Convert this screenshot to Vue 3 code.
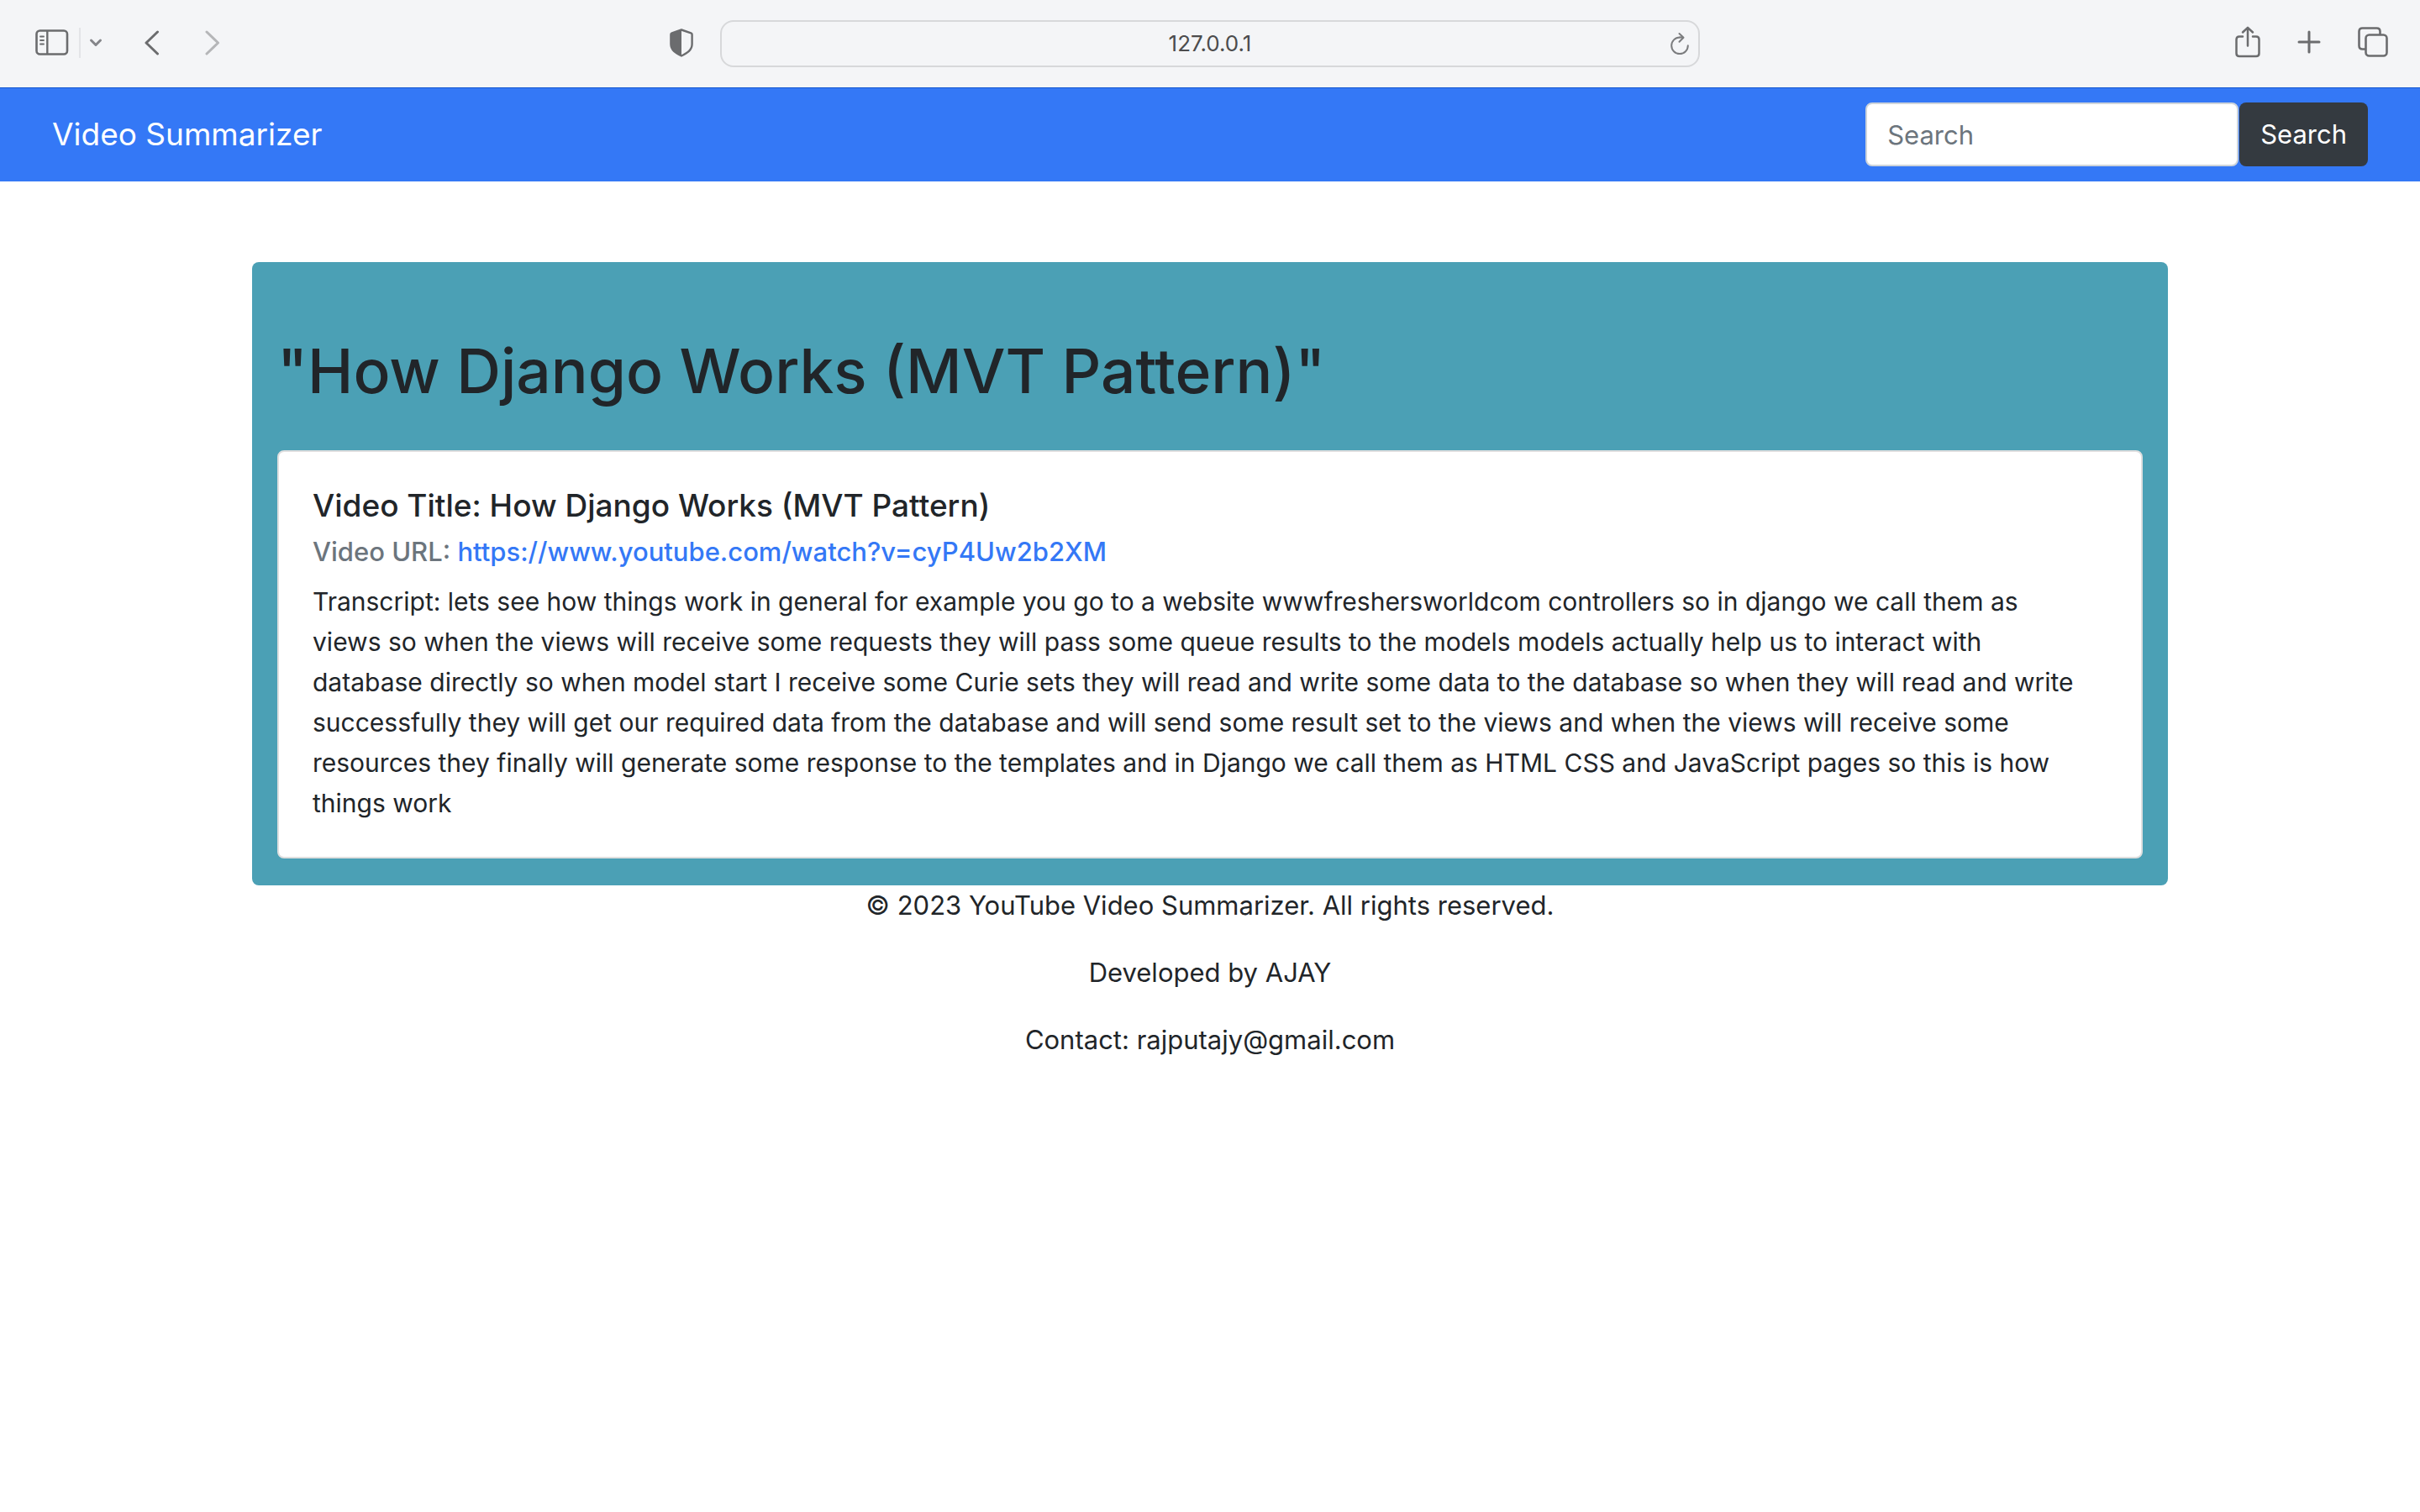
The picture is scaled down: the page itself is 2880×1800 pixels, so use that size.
<script setup>
import { ref } from 'vue'

const query = ref('')
const video = {
  title: 'How Django Works (MVT Pattern)',
  url: 'https://www.youtube.com/watch?v=cyP4Uw2b2XM',
  transcript: [
    'lets see how things work in general for example you go to a website wwwfreshersworldcom controllers so in django we call them as',
    'views so when the views will receive some requests they will pass some queue results to the models models actually help us to interact with',
    'database directly so when model start I receive some Curie sets they will read and write some data to the database so when they will read and write',
    'successfully they will get our required data from the database and will send some result set to the views and when the views will receive some',
    'resources they finally will generate some response to the templates and in Django we call them as HTML CSS and JavaScript pages so this is how',
    'things work',
  ].join('\n'),
}
const footerLines = [
  '© 2023 YouTube Video Summarizer. All rights reserved.',
  'Developed by AJAY',
  'Contact: rajputajy@gmail.com',
]
</script>

<template>
  <div class="window">
    <header class="toolbar">
      <div class="tools tools-left">
        <button class="tool" type="button" aria-label="Show sidebar">
          <svg width="40" height="32" viewBox="0 0 40 32" fill="none" stroke="currentColor">
            <rect x="1.5" y="1.5" width="36.5" height="28" rx="4" stroke-width="2.6" />
            <path d="M14.3 2v27" stroke-width="2.4" />
            <path d="M6 8.5h4M6 13h4M6 17.5h4" stroke-width="1.8" stroke-linecap="round" />
          </svg>
        </button>
        <span class="divider"></span>
        <button class="tool menu" type="button" aria-label="Tab groups">
          <svg width="16" height="12" viewBox="0 0 16 12" fill="none" stroke="currentColor" stroke-width="3" stroke-linecap="round" stroke-linejoin="round">
            <path d="M2.5 3l5.500 5.500L13.500 3" />
          </svg>
        </button>
        <button class="tool back" type="button" aria-label="Back">
          <svg width="18" height="30" viewBox="0 0 18 30" fill="none" stroke="currentColor" stroke-width="3" stroke-linecap="round" stroke-linejoin="round">
            <path d="M15.500 2L2 15L15.500 28" />
          </svg>
        </button>
        <button class="tool forward" type="button" aria-label="Forward" disabled>
          <svg width="18" height="30" viewBox="0 0 18 30" fill="none" stroke="currentColor" stroke-width="3" stroke-linecap="round" stroke-linejoin="round">
            <path d="M2 2L15.500 15L2 28" />
          </svg>
        </button>
        <button class="tool shield" type="button" aria-label="Privacy report">
          <svg width="28" height="34" viewBox="0 0 28 34" fill="none" stroke="currentColor" stroke-width="2.4" stroke-linejoin="round">
            <path d="M14 1.5L25.3 5.3Q26.600 5.800 26.600 7V18.500C26.600 25.500 21 29 14 32.500C7 29 1.400 25.500 1.400 18.500V7Q1.400 5.800 2.700 5.300Z" />
            <path d="M14 1.5V32.5C7 29 1.4 25.500 1.400 18.500V7Q1.400 5.800 2.700 5.300Z" fill="currentColor" stroke="none" />
          </svg>
        </button>
      </div>
      <div class="address">
        <span class="host">127.0.0.1</span>
        <button class="tool reload" type="button" aria-label="Reload">
          <svg width="24" height="28" viewBox="0 0 24 28" fill="none" stroke="currentColor" stroke-width="2" stroke-linecap="round" stroke-linejoin="round">
            <path d="M12 6.500A9.800 9.800 0 1 0 21.800 16.300" />
            <path d="M11.500 2L16.500 6.800L11.500 11.800M12 6.500h3" />
          </svg>
        </button>
      </div>
      <div class="tools tools-right">
        <button class="tool" type="button" aria-label="Share">
          <svg width="30" height="38" viewBox="0 0 30 38" fill="none" stroke="currentColor" stroke-width="2.5" stroke-linecap="round" stroke-linejoin="round">
            <path d="M9 12.500H5Q1.500 12.500 1.500 16V32.500Q1.500 36 5 36H25Q28.500 36 28.500 32.500V16Q28.500 12.500 25 12.500H21" />
            <path d="M15 23.500V2M9 7.500L15 1.800L21 7.500" />
          </svg>
        </button>
        <button class="tool" type="button" aria-label="New tab">
          <svg width="28" height="28" viewBox="0 0 28 28" fill="none" stroke="currentColor" stroke-width="3" stroke-linecap="round">
            <path d="M14 2V26M2 14H26" />
          </svg>
        </button>
        <button class="tool" type="button" aria-label="Tab overview">
          <svg width="36" height="36" viewBox="0 0 36 36" fill="none" stroke="currentColor" stroke-width="2.6">
            <rect x="9.500" y="9.500" width="25" height="25" rx="4" />
            <path d="M9.500 26.500H5.500Q1.500 26.500 1.500 22.500V5.500Q1.500 1.500 5.500 1.500H22.500Q26.500 1.500 26.500 5.500V9.500" />
          </svg>
        </button>
      </div>
    </header>

    <nav class="navbar">
      <a class="brand" href="#">Video Summarizer</a>
      <form class="search" @submit.prevent>
        <input v-model="query" class="search-box" type="search" placeholder="Search" aria-label="Search" />
        <button class="search-button" type="submit">Search</button>
      </form>
    </nav>

    <main class="panel">
      <h1 class="heading">"{{ video.title }}"</h1>
      <article class="card">
        <h2 class="card-title">Video Title: {{ video.title }}</h2>
        <h3 class="card-subtitle">Video URL: <a class="link" :href="video.url">{{ video.url }}</a></h3>
        <p class="transcript">Transcript: {{ video.transcript }}</p>
      </article>
    </main>

    <footer class="footer">
      <p v-for="line in footerLines" :key="line" class="footer-line">{{ line }}</p>
    </footer>
  </div>
</template>

<style>
body {
  background: #fff;
}
</style>

<style scoped>
.window {
  font-family: Inter, "Liberation Sans", sans-serif;
  font-size: 31px;
  line-height: 48px;
  color: #212529;
}
.toolbar {
  display: grid;
  grid-template-columns: 1fr 1166px 1fr;
  align-items: center;
  height: 104px;
  background: #f4f5f7;
  color: #6b6c6e;
}
.tools {
  display: flex;
  align-items: center;
}
.tools-left {
  padding: 0 32px 2px 42px;
}
.tools-right {
  justify-content: flex-end;
  gap: 44px;
  padding: 0 38px 4px 0;
}
.tool {
  display: flex;
  padding: 0;
  border: 0;
  background: none;
  color: inherit;
}
.divider {
  width: 2px;
  height: 36px;
  margin: 0 10px 0 12px;
  background: #e3e4e7;
}
.menu {
  color: #85868a;
}
.back {
  margin-left: 50px;
}
.forward {
  margin-left: 54px;
  color: #b5b6b8;
}
.shield {
  margin-left: auto;
}
.address {
  display: grid;
  grid-template-columns: 1fr auto 1fr;
  align-items: center;
  box-sizing: border-box;
  height: 56px;
  padding: 0 10px;
  border: 2px solid #d7d8da;
  border-radius: 16px;
}
.host {
  grid-column: 2;
  font-size: 26px;
  color: #4c4c4d;
}
.reload {
  justify-self: end;
  color: #7b7c7e;
}
.navbar {
  display: flex;
  align-items: center;
  justify-content: space-between;
  height: 112px;
  padding: 0 62px;
  background: #3478f6;
  box-shadow: inset 0 1px #1457d0;
}
.brand {
  font-size: 37px;
  color: #fff;
  text-decoration: none;
}
.search {
  display: flex;
  gap: 1px;
}
.search-box,
.search-button {
  box-sizing: border-box;
  height: 76px;
  margin: 0;
  border-radius: 8px;
  font: inherit;
}
.search-box {
  width: 444px;
  padding: 0 24px;
  border: 2px solid #ced4da;
  background: #fff;
  color: #495057;
  appearance: none;
}
.search-box::placeholder {
  color: #6c757d;
  opacity: 1;
}
.search-button {
  padding: 0 25px;
  border: 0;
  background: #343a40;
  color: #fff;
}
.panel {
  box-sizing: border-box;
  margin: 96px 300px 0;
  padding: 82px 30px 32px;
  border-radius: 8px;
  background: #4ba0b5;
}
.heading {
  margin: 0 0 46px;
  font-size: 73px;
  font-weight: 500;
  line-height: 96px;
}
.card {
  padding: 40px;
  border: 2px solid #dfdfdf;
  border-radius: 8px;
  background: #fff;
}
.card-title {
  margin: 0 0 12px;
  font-size: 37px;
  font-weight: 500;
  line-height: 48px;
}
.card-subtitle {
  margin: 0 0 16px;
  font-size: 31px;
  font-weight: 500;
  line-height: 38px;
  color: #6c757d;
}
.link {
  color: #3478f6;
  text-decoration: none;
}
.transcript {
  margin: 0;
  font-size: 30px;
  white-space: pre-line;
}
.footer {
  text-align: center;
}
.footer-line {
  margin: 0 0 32px;
}
</style>
